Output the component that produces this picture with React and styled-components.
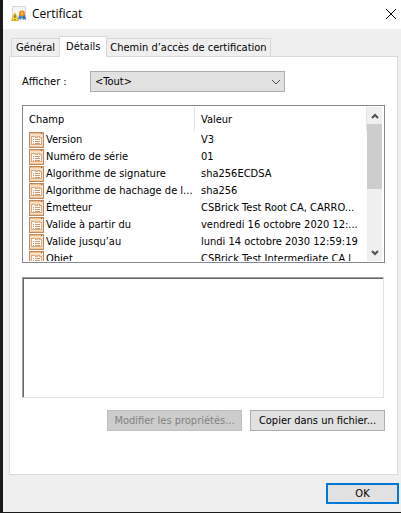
import React from "react";
import styled, { createGlobalStyle, css } from "styled-components";

const GlobalStyle = createGlobalStyle`
  *, *::before, *::after { box-sizing: border-box; }
  body { margin: 0; background: #1a1a1a; }
  button, select, textarea, input { font: inherit; color: inherit; margin: 0; border-radius: 0; }
`;

const Dialog = styled.main`
  display: flex;
  flex-direction: column;
  min-height: calc(100vh - 1px);
  margin: 0 0 1px 3px;
  background: #efefef;
  color: #000;
  font: 11px/17px "DejaVu Sans Condensed", "DejaVu Sans", sans-serif;
`;

const TitleBar = styled.header`
  display: flex;
  align-items: center;
  gap: 5px;
  height: 29px;
  padding: 0 4px 2px 8px;
  background: #fff;
`;

const Title = styled.h1`
  flex: 1;
  margin: 0;
  font: 400 12px/18px "Open Sans", sans-serif;
`;

const CloseButton = styled.button`
  display: flex;
  padding: 0;
  border: 0;
  background: none;
`;

const Content = styled.section`
  display: flex;
  flex: 1;
  flex-direction: column;
  padding: 7px 2px 8px 6px;
`;

const Tabs = styled.div`
  display: flex;
  align-items: flex-end;
  padding-left: 2px;
`;

const Tab = styled.button`
  flex: none;
  height: 19px;
  margin: 0 0 -1px -1px;
  padding: 0 3px;
  border: 1px solid #d9d9d9;
  background: #efefef;
  white-space: nowrap;
  &:first-child { margin-left: 0; padding: 0 4px; }
  ${({ $active }) => $active && css`
    z-index: 1;
    height: 21px;
    padding: 0 6px 2px;
    border-bottom: 0;
    background: #fff;
  `}
`;

const Panel = styled.div`
  display: flex;
  flex: 1;
  flex-direction: column;
  margin-right: 1px;
  padding: 14px 12px;
  border: 1px solid #d9d9d9;
  background: #fff;
`;

const FilterRow = styled.div`
  display: flex;
  align-items: center;
  margin-bottom: 13px;
`;

const FilterLabel = styled.label`
  width: 68px;
`;

const SelectBox = styled.div`
  display: grid;
  width: 195px;
  align-items: center;
  svg { grid-area: 1 / 1; justify-self: end; margin-right: 4px; pointer-events: none; }
`;

const Select = styled.select`
  grid-area: 1 / 1;
  width: 100%;
  height: 21px;
  padding: 0 4px;
  border: 1px solid #adadad;
  background: #e1e1e1;
  appearance: none;
`;

const ListFrame = styled.div`
  display: flex;
  height: 158px;
  padding: 1px;
  border: 1px solid #828790;
`;

const ListView = styled.div`
  flex: 1;
  min-width: 0;
  overflow: hidden;
`;

const FieldTable = styled.table`
  width: 100%;
  border-collapse: separate;
  border-spacing: 0;
  table-layout: fixed;
`;

const HeaderCell = styled.th`
  width: ${({ $width }) => $width || "auto"};
  height: 24px;
  padding: 0 5px;
  border-right: 1px solid #e5e5e5;
  font-weight: 400;
  text-align: left;
  &:last-child { padding-left: 6px; }
`;

const Cell = styled.td`
  height: 17px;
  padding: 0 0 0 5px;
  overflow: hidden;
  white-space: nowrap;
  &:last-child { padding-left: 6px; }
`;

const Field = styled.span`
  display: flex;
  align-items: center;
  gap: 2px;
  svg { flex: none; }
`;

const ScrollBar = styled.div`
  display: flex;
  flex-direction: column;
  width: 16px;
  padding-right: 1px;
  background: #efefef;
  background-clip: content-box;
`;

const ScrollButton = styled.button`
  display: grid;
  place-items: center;
  height: 17px;
  padding: 0;
  border: 0;
  background: none;
`;

const Thumb = styled.div`
  height: 65px;
  margin-bottom: auto;
  background: #cdcdcd;
`;

const ValueBox = styled.textarea`
  display: block;
  width: calc(100% - 1px);
  height: 121px;
  margin: 14px 0 12px;
  padding: 4px;
  border: 1px solid;
  border-color: #a0a0a0 #e3e3e3 #e3e3e3 #a0a0a0;
  box-shadow: inset 1px 1px #696969;
  outline: 0;
  resize: none;
`;

const Actions = styled.div`
  display: flex;
  justify-content: flex-end;
  gap: 8px;
`;

const Button = styled.button`
  width: ${({ $primary }) => ($primary ? "73px" : "135px")};
  height: 21px;
  padding: 0;
  border: ${({ $primary }) => ($primary ? "2px solid #0078d7" : "1px solid #adadad")};
  background: #e1e1e1;
  line-height: 15px;
  white-space: nowrap;
  &:disabled { border-color: #bfbfbf; background: #ccc; color: #838383; }
`;

const Footer = styled.footer`
  display: flex;
  justify-content: flex-end;
  padding-top: 8px;
`;

const CertificateIcon = () => (
  <svg width="16" height="16" viewBox="0 0 16 16" aria-hidden="true">
    <path d="M1.5.5h13v11h-13z" fill="#f7f5f2" stroke="#ddd8d2" />
    <path d="m8 9 2-1 1 3-1 3-1-1-2 1z" fill="#3b7fd0" />
    <path d="m14 9-2-1-1 3 1 3 1-1 2 1z" fill="#2868b7" />
    <circle cx="11" cy="7.5" r="3" fill="#e39420" />
    <circle cx="11" cy="7.5" r="1" fill="#ffcf66" />
    <path d="M4 7 7.5 14.5H.5z" fill="#ffda34" stroke="#e0b020" />
    <path d="M3.5 9h1v3h-1zm0 4h1v1h-1z" fill="#51451b" />
  </svg>
);

const FieldIcon = () => (
  <svg width="15" height="16" viewBox="0 0 15 16" aria-hidden="true" shapeRendering="crispEdges">
    <path d="M.5.5h14v15H.5z" fill="#f6dfc6" stroke="#b98a63" />
    <path d="M1 1h13v1H1z" fill="#f5bd80" />
    <path d="M1 14h13v1H1z" fill="#efc797" />
    <path d="M12 1h1v1h-1z" fill="#89562e" />
    <path d="M2.5 4.5h4v1h2v-1h2v1h2v7h-10z" fill="#fffaf5" stroke="#d9ab80" />
    <path d="M4 7h1v1H4zm2 0h5v1H6zM4 9h1v1H4zm2 0h5v1H6zM4 11h1v1H4zm2 0h5v1H6z" fill="#cc9c74" />
  </svg>
);

const Chevron = ({ d, color = "#505050", thick = 2 }) => (
  <svg width="10" height="8" viewBox="0 0 10 8" fill="none" stroke={color} strokeWidth={thick} aria-hidden="true">
    <path d={d} />
  </svg>
);

const fields = [
  ["Version", "V3"],
  ["Numéro de série", "01"],
  ["Algorithme de signature", "sha256ECDSA"],
  ["Algorithme de hachage de l...", "sha256"],
  ["Émetteur", "CSBrick Test Root CA, CARRO..."],
  ["Valide à partir du", "vendredi 16 octobre 2020 12:..."],
  ["Valide jusqu’au", "lundi 14 octobre 2030 12:59:19"],
  ["Objet", "CSBrick Test Intermediate CA l"],
];

export default function App() {
  return (
    <>
      <GlobalStyle />
      <Dialog>
        <TitleBar>
          <CertificateIcon />
          <Title>Certificat</Title>
          <CloseButton aria-label="Fermer">
            <svg width="12" height="12" viewBox="0 0 12 12" stroke="#000" aria-hidden="true">
              <path d="m1 1 10 10M11 1 1 11" />
            </svg>
          </CloseButton>
        </TitleBar>
        <Content>
          <Tabs role="tablist">
            <Tab role="tab" aria-selected="false">Général</Tab>
            <Tab role="tab" aria-selected="true" $active>Détails</Tab>
            <Tab role="tab" aria-selected="false">Chemin d’accès de certification</Tab>
          </Tabs>
          <Panel role="tabpanel">
            <FilterRow>
              <FilterLabel htmlFor="filter">Afficher :</FilterLabel>
              <SelectBox>
                <Select id="filter"><option>&lt;Tout&gt;</option></Select>
                <Chevron d="m1 2 4 4 4-4" thick={1} />
              </SelectBox>
            </FilterRow>
            <ListFrame>
              <ListView>
                <FieldTable>
                  <thead>
                    <tr>
                      <HeaderCell $width="171px">Champ</HeaderCell>
                      <HeaderCell>Valeur</HeaderCell>
                    </tr>
                  </thead>
                  <tbody>
                    {fields.map(([name, value]) => (
                      <tr key={name}>
                        <Cell><Field><FieldIcon />{name}</Field></Cell>
                        <Cell>{value}</Cell>
                      </tr>
                    ))}
                  </tbody>
                </FieldTable>
              </ListView>
              <ScrollBar>
                <ScrollButton aria-label="Défiler vers le haut"><Chevron d="m2 6 3-3 3 3" /></ScrollButton>
                <Thumb />
                <ScrollButton aria-label="Défiler vers le bas"><Chevron d="m2 2 3 3 3-3" /></ScrollButton>
              </ScrollBar>
            </ListFrame>
            <ValueBox aria-label="Valeur du champ" readOnly />
            <Actions>
              <Button disabled>Modifier les propriétés...</Button>
              <Button>Copier dans un fichier...</Button>
            </Actions>
          </Panel>
          <Footer><Button $primary>OK</Button></Footer>
        </Content>
      </Dialog>
    </>
  );
}
